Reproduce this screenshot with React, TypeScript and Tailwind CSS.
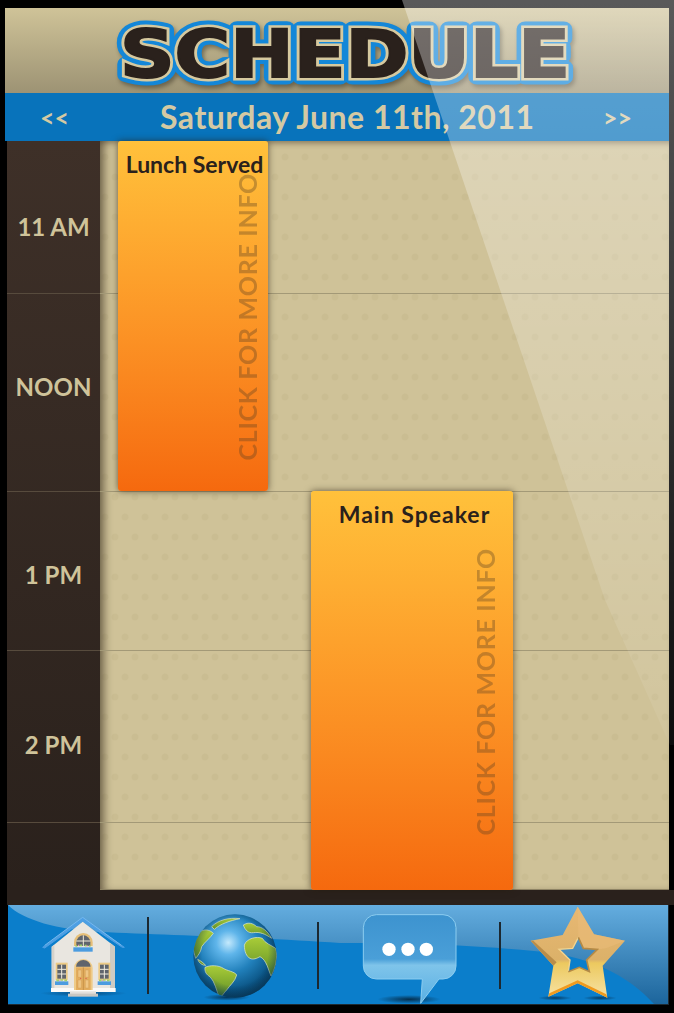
const HOURS = [
  { label: '11 AM', h: 'h-[153px]', pt: 'pt-[72px]' },
  { label: 'NOON', h: 'h-[198px]', pt: 'pt-[79px]' },
  { label: '1 PM', h: 'h-[159px]', pt: 'pt-[69px]' },
  { label: '2 PM', h: 'h-[172px]', pt: 'pt-[80px]' },
  { label: '', h: 'h-[67px]', pt: '' },
];

function Logo() {
  const common = {
    x: 120,
    y: 77,
    textLength: 450,
    lengthAdjust: 'spacingAndGlyphs' as const,
    fontFamily: '"DejaVu Sans", sans-serif',
    fontWeight: 700,
    fontSize: 66,
    strokeLinejoin: 'miter' as const,
  };
  return (
    <svg width="664" height="85" viewBox="5 8 664 85" className="block overflow-visible">
      <text {...common} fill="#1487d8" stroke="#1487d8" strokeWidth="15" strokeLinejoin="round" className="drop-shadow-[2px_3px_2px_rgba(40,35,25,0.45)]" aria-hidden="true">SCHEDULE</text>
      <text {...common} fill="#d6c99f" stroke="#d6c99f" strokeWidth="7" aria-hidden="true">SCHEDULE</text>
      <text {...common} fill="#2a211c" stroke="#2a211c" strokeWidth="2">SCHEDULE</text>
    </svg>
  );
}

function HouseIcon() {
  return (
    <svg width="105" height="99" viewBox="0 -12 315 297">
      <defs>
        <radialGradient id="hshadow">
          <stop offset="0" stopColor="#06385f" stopOpacity="0.7" />
          <stop offset="1" stopColor="#06385f" stopOpacity="0" />
        </radialGradient>
      </defs>
      <ellipse cx="160" cy="250" rx="130" ry="10" fill="url(#hshadow)" />
      <path d="M65 110 L158 35 L255 110 V240 H65Z" fill="#e9e6e0" />
      <path d="M240 98 L255 110 V240 H240Z" fill="#cfcbc3" />
      <path d="M65 110 V240 H73 V104Z" fill="#d6d2ca" />
      <rect x="63" y="234" width="194" height="12" fill="#fbfaf8" />
      <rect x="120" y="244" width="78" height="8" fill="#e2e0dc" />
      <rect x="114" y="251" width="90" height="9" fill="#c9c7c2" />
      <path d="M38 112 L158 22 L283 112 L277 112 L158 33 L44 114Z" fill="#4d9fe4" stroke="#4d9fe4" strokeWidth="3" strokeLinejoin="round" />
      <path d="M44 106 L158 22 L274 106" fill="none" stroke="#8ec6f0" strokeWidth="2" />
      {/* upper window */}
      <path d="M132 108 V97 A28 28 0 0 1 188 97 V108Z" fill="#e6bf78" />
      <path d="M139 108 V97 A21 21 0 0 1 181 97 V108Z" fill="#5f646c" />
      <path d="M160 76 V108 M139 93 H181" stroke="#f1ead8" strokeWidth="3" />
      <rect x="130" y="112" width="58" height="13" fill="#4b9ce0" />
      <path d="M136 108 h6 M148 106 h8 M164 107 h6 M176 108 h6" stroke="#9ed06c" strokeWidth="5" />
      <path d="M144 106 h3 M170 108 h3" stroke="#f08cc0" strokeWidth="4" />
      {/* door */}
      <path d="M132 240 V175 A28 28 0 0 1 188 175 V240Z" fill="#eecb88" />
      <path d="M138 170 A22 20 0 0 1 182 170Z" fill="#5f646c" />
      <rect x="138" y="172" width="44" height="68" fill="#e3ad5e" />
      <path d="M160 172 V240" stroke="#b9853f" strokeWidth="2" />
      <path d="M144 180 h10 v22 h-10Z M166 180 h10 v22 h-10Z M144 210 h10 v24 h-10Z M166 210 h10 v24 h-10Z" fill="#efc583" stroke="#c8944d" strokeWidth="1" />
      <circle cx="152" cy="205" r="2" fill="#d9534f" />
      <circle cx="168" cy="205" r="2" fill="#d9534f" />
      {/* side windows */}
      {[77, 205].map((x) => (
        <g key={x}>
          <rect x={x} y="158" width="36" height="52" fill="#ecca85" />
          <rect x={x + 5} y="164" width="26" height="42" fill="#5f646c" />
          <path d={`M${x + 18} 164 V206 M${x + 5} 178 H${x + 31} M${x + 5} 192 H${x + 31}`} stroke="#f3eedf" strokeWidth="3" />
          <rect x={x - 2} y="214" width="40" height="11" fill="#4b9ce0" />
          <path d={`M${x + 2} 211 h8 M${x + 14} 210 h8 M${x + 26} 211 h8`} stroke="#9ed06c" strokeWidth="5" />
          <path d={`M${x + 11} 211 h3`} stroke="#f08cc0" strokeWidth="4" />
        </g>
      ))}
    </svg>
  );
}

function GlobeIcon() {
  return (
    <svg width="100" height="99" viewBox="0 -12 300 297">
      <defs>
        <radialGradient id="sea" cx="0.42" cy="0.34" r="0.72">
          <stop offset="0" stopColor="#c4e9fc" />
          <stop offset="0.2" stopColor="#5fb5ea" />
          <stop offset="0.5" stopColor="#2180bb" />
          <stop offset="0.8" stopColor="#0b5484" />
          <stop offset="1" stopColor="#093a5c" />
        </radialGradient>
        <linearGradient id="land" x1="0" y1="0" x2="0" y2="1">
          <stop offset="0" stopColor="#a9cc38" />
          <stop offset="1" stopColor="#5f8f26" />
        </linearGradient>
        <radialGradient id="rim" cx="0.5" cy="0.46" r="0.55">
          <stop offset="0.72" stopColor="#06304d" stopOpacity="0" />
          <stop offset="1" stopColor="#06304d" stopOpacity="0.6" />
        </radialGradient>
        <radialGradient id="gshadow">
          <stop offset="0" stopColor="#052a47" stopOpacity="0.85" />
          <stop offset="1" stopColor="#052a47" stopOpacity="0" />
        </radialGradient>
        <clipPath id="ball">
          <circle cx="150" cy="138" r="125" />
        </clipPath>
      </defs>
      <ellipse cx="125" cy="262" rx="70" ry="10" fill="url(#gshadow)" />
      <circle cx="150" cy="138" r="125" fill="url(#sea)" />
      <g clipPath="url(#ball)" fill="url(#land)" stroke="#e6ead0" strokeWidth="2">
        <path d="M60 172 C75 165 100 165 115 175 C125 182 150 185 155 195 C150 215 135 225 125 240 C115 250 110 262 103 262 C95 245 90 215 75 200 C65 195 58 185 60 172Z" />
        <path d="M178 105 C185 85 215 78 232 85 C240 100 258 105 272 115 C280 140 270 180 258 198 C250 180 245 150 225 140 C215 145 205 150 195 145 C185 140 178 125 178 105Z" />
        <path d="M175 45 C190 35 205 40 215 50 C230 50 245 60 260 85 C240 72 225 65 205 68 C190 70 180 60 175 45Z" />
        <path d="M24 85 C40 62 65 50 85 70 C75 85 60 95 50 110 C48 125 40 135 32 145 C24 120 20 100 24 85Z" />
        <path d="M80 50 C100 30 130 22 165 26 C135 32 105 42 88 58Z" />
        <path d="M38 148 C48 152 56 160 62 166 C52 166 42 160 38 148Z" />
      </g>
      <circle cx="150" cy="138" r="125" fill="url(#rim)" />
    </svg>
  );
}

function BubbleIcon() {
  return (
    <svg width="100" height="99" viewBox="78 78 300 297">
      <defs>
        <linearGradient id="bub" x1="0" y1="0" x2="0" y2="1">
          <stop offset="0" stopColor="#3d93cf" />
          <stop offset="0.5" stopColor="#4a9fd8" />
          <stop offset="0.57" stopColor="#7fc4ea" />
          <stop offset="1" stopColor="#58afe3" />
        </linearGradient>
        <radialGradient id="bshadow">
          <stop offset="0" stopColor="#042640" stopOpacity="0.9" />
          <stop offset="1" stopColor="#042640" stopOpacity="0" />
        </radialGradient>
      </defs>
      <ellipse cx="225" cy="358" rx="95" ry="13" fill="url(#bshadow)" />
      <path
        d="M127 104 H327 A39 39 0 0 1 366 143 V258 A39 39 0 0 1 327 297 H315 L260 370 L265 297 H127 A39 39 0 0 1 88 258 V143 A39 39 0 0 1 127 104Z"
        fill="url(#bub)"
        stroke="#8ccdf0"
        strokeWidth="3"
      />
      <circle cx="165" cy="208" r="20" fill="#ffffff" />
      <circle cx="222" cy="208" r="20" fill="#ffffff" />
      <circle cx="277" cy="208" r="20" fill="#ffffff" />
    </svg>
  );
}

function StarIcon() {
  return (
    <svg width="110" height="99" viewBox="0 3 330 297">
      <defs>
        <linearGradient id="gold" x1="0" y1="0" x2="0" y2="1">
          <stop offset="0" stopColor="#e8b873" />
          <stop offset="0.58" stopColor="#dcb169" />
          <stop offset="0.62" stopColor="#ecc95f" />
          <stop offset="1" stopColor="#f7e2a4" />
        </linearGradient>
        <radialGradient id="sshadow">
          <stop offset="0" stopColor="#052a47" stopOpacity="0.8" />
          <stop offset="1" stopColor="#052a47" stopOpacity="0" />
        </radialGradient>
      </defs>
      <ellipse cx="105" cy="279" rx="50" ry="7" fill="url(#sshadow)" />
      <ellipse cx="240" cy="279" rx="50" ry="7" fill="url(#sshadow)" />
      <path
        fillRule="evenodd"
        d="M173 5 L222 88 L315 107 L248 182 L262 278 L173 235 L85 275 L100 182 L32 107 L128 90Z M175 97 L158 130 L117 133 L150 165 L145 200 L178 187 L208 200 L200 165 L232 133 L190 130Z"
        fill="url(#gold)"
      />
      <path d="M173 5 L222 88 L315 107 L258 130 L232 133 L190 130 L175 97Z" fill="#e9bb78" opacity="0.6" />
      <path d="M32 107 L100 182 L110 172 L40 107Z" fill="#b98d4a" />
      <path d="M175 97 L158 130 L117 133 L150 165 L145 200" fill="none" stroke="#f3d48e" strokeWidth="4" />
      <path d="M175 97 L190 130 L232 133 L200 165 L208 200 L178 187 L145 200" fill="none" stroke="#b58a45" strokeWidth="5" />
      <path d="M85 275 L173 235 L262 278 L259 268 L173 226 L88 265Z" fill="#f09a1e" />
    </svg>
  );
}

function Separator({ h }: { h: string }) {
  return <div className={`w-[2px] shrink-0 bg-[#1c2830] ${h}`} />;
}

function Event({ title, className, titleClass, labelClass }: { title: string; className: string; titleClass: string; labelClass: string }) {
  return (
    <div className={`absolute rounded-[3px] bg-linear-to-b from-[#ffc13b] to-[#f5690e] shadow-[0_0_7px_rgba(40,30,15,0.65)] ${className}`}>
      <div className={`pt-[9px] text-center leading-[28px] font-bold text-[#2a211c] whitespace-nowrap ${titleClass}`}>{title}</div>
      <div className={`absolute rotate-180 [writing-mode:vertical-rl] text-[25px] leading-[25px] font-bold tracking-[0.7px] text-[#5a4022]/35 whitespace-nowrap ${labelClass}`}>
        CLICK FOR MORE INFO
      </div>
    </div>
  );
}

export default function App() {
  return (
    <div className="relative w-[674px] h-[1013px] overflow-hidden bg-black pt-[8px] [font-family:Lato,sans-serif]">
      {/* Header */}
      <div className="ml-[5px] w-[664px] h-[85px] bg-linear-to-b from-[#cfc398] to-[#9d9374]">
        <Logo />
      </div>

      {/* Date bar */}
      <div className="ml-[5px] w-[664px] h-[48px] bg-[#0873bb] flex items-center pl-[35px] pr-[37px] text-[#d4c9a3]">
        <span className="text-[25px] leading-none font-bold">&lt;&lt;</span>
        <span className="ml-[91px] text-[32px] leading-none font-bold tracking-[0.5px]">Saturday June 11th, 2011</span>
        <span className="ml-auto text-[25px] leading-none font-bold">&gt;&gt;</span>
      </div>

      {/* Schedule */}
      <div className="ml-[7px] w-[662px] h-[749px] flex">
        <div className="w-[93px] shrink-0 bg-linear-to-b from-[#3e3028] to-[#2a211c] text-[#cfc39a]">
          {HOURS.map((hour, i) => (
            <div
              key={i}
              className={`${hour.h} ${hour.pt} text-center text-[24px] leading-[28px] font-bold ${i < 4 ? 'border-b border-[#574b3d]' : ''}`}
            >
              {hour.label}
            </div>
          ))}
        </div>
        <div className="relative flex-1 bg-[#cfc298] bg-[radial-gradient(circle_at_15px_36px,#cabd92_3px,transparent_4px),radial-gradient(circle_at_5px_16px,#cabd92_3px,transparent_4px)] bg-[length:20px_40px] shadow-[inset_8px_0_8px_-4px_rgba(50,38,25,0.6),inset_0_6px_6px_-4px_rgba(50,38,25,0.4)] border-b border-[#8f8465]">
          {HOURS.map((hour, i) => (
            <div key={i} className={`${hour.h} ${i < 4 ? 'border-b border-[#a39977]' : ''}`} />
          ))}
          <Event title="Lunch Served" titleClass="text-[23px] pl-[3px]" className="left-[18px] top-0 w-[150px] h-[350px]" labelClass="right-[8px] top-[32px]" />
          <Event title="Main Speaker" titleClass="text-[23px] tracking-[1px] pl-[5px]" className="left-[211px] top-[350px] w-[202px] h-[399px]" labelClass="right-[15px] top-[57px]" />
        </div>
      </div>

      <div className="ml-[7px] w-[667px] h-[15px] bg-[#2a211c]" />

      {/* Nav */}
      <div className="relative ml-[8px] w-[661px] h-[100px] bg-[#0b7ecb] border-b border-[#1d2a33] border-r overflow-hidden">
        <svg className="absolute left-0 top-0" width="661" height="99" viewBox="0 0 661 99" preserveAspectRatio="none">
          <defs>
            <linearGradient id="navTop" x1="0" y1="0" x2="0" y2="1">
              <stop offset="0" stopColor="#64addf" />
              <stop offset="1" stopColor="#1c659c" />
            </linearGradient>
          </defs>
          <path d="M0 0 H661 V99 H646 C620 70 580 50 526 46 C440 38 380 38 332 38 C260 33 160 30 92 27 C50 25 15 15 0 0Z" fill="url(#navTop)" />
        </svg>
        <div className="relative flex items-center h-[99px] mt-[1px] pl-[22px]">
          <HouseIcon />
          <div className="ml-[12px]"><Separator h="h-[77px]" /></div>
          <div className="ml-[36px]"><GlobeIcon /></div>
          <div className="ml-[32px]"><Separator h="h-[67px]" /></div>
          <div className="ml-[41px]"><BubbleIcon /></div>
          <div className="ml-[39px]"><Separator h="h-[67px]" /></div>
          <div className="ml-[19px]"><StarIcon /></div>
        </div>
      </div>

      {/* Glare over the whole screen */}
      <div className="absolute left-0 top-0 w-[674px] h-[745px] pointer-events-none bg-linear-to-b from-white/35 to-white/5 [clip-path:polygon(402px_0,605px_600px,670px_745px,674px_745px,674px_0)]" />
    </div>
  );
}
